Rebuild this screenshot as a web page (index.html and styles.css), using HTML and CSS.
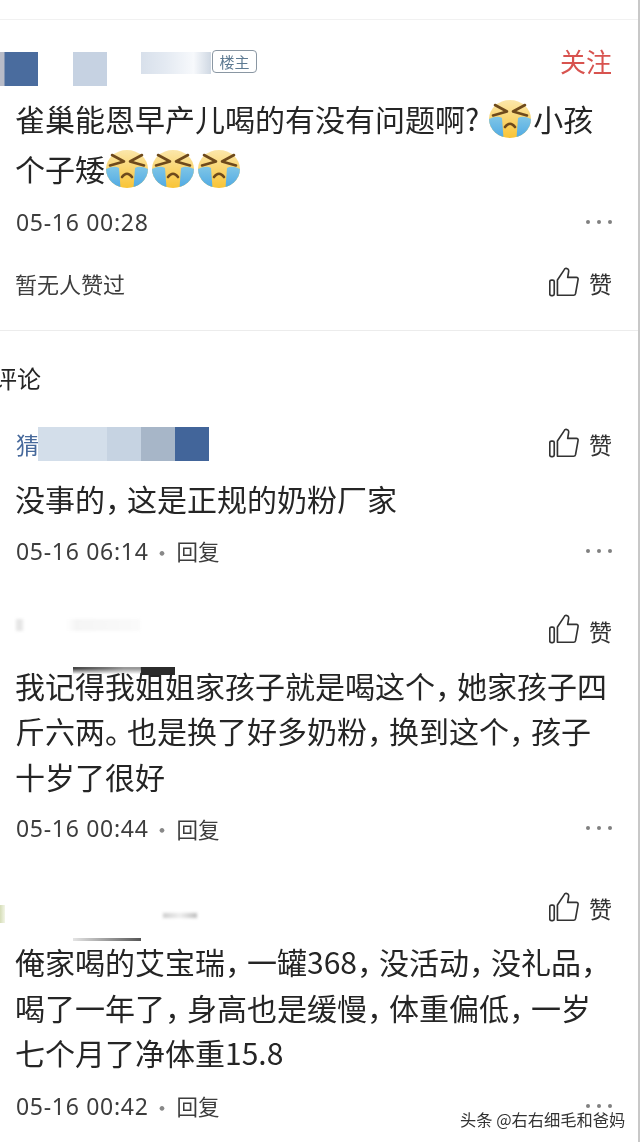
FILE: index.html
```html
<!DOCTYPE html>
<html lang="zh">
<head>
<meta charset="utf-8">
<title>评论</title>
<link rel="stylesheet" href="styles.css">
</head>
<body>
<svg class="defs" width="0" height="0" aria-hidden="true">
  <defs>
    <linearGradient id="skin" x1="0" y1="0" x2="0" y2="1">
      <stop offset="0" stop-color="#fbe7ab"/>
      <stop offset="1" stop-color="#f9c435"/>
    </linearGradient>
    <linearGradient id="tear" x1="0" y1="0" x2="0" y2="1">
      <stop offset="0" stop-color="#7fc6e6"/>
      <stop offset="1" stop-color="#4fa9e4"/>
    </linearGradient>
    <clipPath id="face"><ellipse cx="21" cy="19" rx="21" ry="19"/></clipPath>
    <symbol id="cry" viewBox="0 0 42 38">
      <ellipse cx="21" cy="19" rx="21" ry="19" fill="url(#skin)"/>
      <g clip-path="url(#face)">
        <path d="M0 19 Q8 15 13 18 L14.5 38 H0 Z" fill="url(#tear)"/>
        <path d="M42 19 Q34 15 29 18 L27.5 38 H42 Z" fill="url(#tear)"/>
      </g>
      <path d="M6 5 L18 11.5 L4 15.5" fill="none" stroke="#6e4a1c" stroke-width="2.6" stroke-linecap="round" stroke-linejoin="round"/>
      <path d="M36 5 L24 11.5 L38 15.5" fill="none" stroke="#6e4a1c" stroke-width="2.6" stroke-linecap="round" stroke-linejoin="round"/>
      <path d="M16 27 Q21 20.5 26 27" fill="none" stroke="#6e4a1c" stroke-width="2.6" stroke-linecap="round"/>
    </symbol>
    <symbol id="thumb" viewBox="0 0 32 30">
      <rect x="0.8" y="13" width="4.6" height="16" rx="1.6" fill="none" stroke="#333" stroke-width="1.7"/>
      <path d="M8.7 28.7 V13 L15.3 3 Q16 .8 17.6 .9 Q20.6 1.2 20.3 4 L19.3 10.3 H28.2 Q30.4 10.3 30 12.5 L27.4 27 Q27 28.7 25.4 28.7 Z" fill="none" stroke="#333" stroke-width="1.7" stroke-linejoin="round"/>
    </symbol>
  </defs>
</svg>

<main class="page">
  <section class="post">
    <header class="post-head">
      <div class="redact">
        <span class="blk blk-a"></span>
        <span class="blk blk-b"></span>
        <span class="blk blk-c"></span>
      </div>
      <span class="tag">楼主</span>
      <span class="follow">关注</span>
    </header>
    <p class="text post-text">雀巢能恩早产儿喝的有没有问题啊?<svg class="emoji emoji-first"><use href="#cry"/></svg>小孩<br>个子矮<svg class="emoji"><use href="#cry"/></svg><svg class="emoji"><use href="#cry"/></svg><svg class="emoji"><use href="#cry"/></svg></p>
    <div class="meta post-meta">
      <span class="time">05-16 00:28</span>
      <span class="more"><i></i><i></i><i></i></span>
    </div>
    <div class="likes">
      <span class="nolike">暂无人赞过</span>
      <span class="like"><svg class="thumb"><use href="#thumb"/></svg><b>赞</b></span>
    </div>
  </section>

  <h2 class="title">评论</h2>

  <article class="comment c1">
    <div class="c-head">
      <div class="name-bar">
        <span class="name">猜</span>
        <span class="seg s1"></span><span class="seg s2"></span><span class="seg s3"></span><span class="seg s4"></span>
      </div>
      <span class="like"><svg class="thumb"><use href="#thumb"/></svg><b>赞</b></span>
    </div>
    <p class="text">没事的<span class="cm">，</span>这是正规的奶粉厂家</p>
    <div class="meta">
      <span class="time">05-16 06:14</span><span class="sep">·</span><span class="reply">回复</span>
      <span class="more"><i></i><i></i><i></i></span>
    </div>
  </article>

  <article class="comment c2">
    <div class="c-head">
      <span class="smudge"></span>
      <span class="like"><svg class="thumb"><use href="#thumb"/></svg><b>赞</b></span>
    </div>
    <div class="text-wrap">
      <span class="smear smear-dark"></span>
      <p class="text">我记得我姐姐家孩子就是喝这个<span class="cm">，</span>她家孩子四<br>斤六两<span class="cm">。</span>也是换了好多奶粉<span class="cm">，</span>换到这个<span class="cm">，</span>孩子<br>十岁了很好</p>
    </div>
    <div class="meta">
      <span class="time">05-16 00:44</span><span class="sep">·</span><span class="reply">回复</span>
      <span class="more"><i></i><i></i><i></i></span>
    </div>
  </article>

  <article class="comment c3">
    <span class="leaf"></span>
    <div class="c-head">
      <span class="smudge smudge-r"></span>
      <span class="like"><svg class="thumb"><use href="#thumb"/></svg><b>赞</b></span>
    </div>
    <div class="text-wrap">
      <span class="smear smear-thin"></span>
      <p class="text">俺家喝的艾宝瑞<span class="cm">，</span>一罐368<span class="cm">，</span>没活动<span class="cm">，</span>没礼品<span class="cm">，</span><br>喝了一年了<span class="cm">，</span>身高也是缓慢<span class="cm">，</span>体重偏低<span class="cm">，</span>一岁<br>七个月了净体重15.8</p>
    </div>
    <div class="meta">
      <span class="time">05-16 00:42</span><span class="sep">·</span><span class="reply">回复</span>
      <span class="more"><i></i><i></i><i></i></span>
    </div>
  </article>

  <span class="mark">头条 @右右细毛和爸妈</span>
</main>
</body>
</html>
```

FILE: styles.css
```css
* { box-sizing: border-box; }
html, body { margin: 0; padding: 0; background: #fff; }
body {
  font-family: "Noto Sans CJK SC", "Noto Sans", sans-serif;
  color: #252525;
  overflow: hidden;
}
.defs { position: absolute; }
.page {
  position: relative;
  width: 640px;
  height: 1142px;
  padding-top: 19px;
  border-right: 2px solid #c8c8c8;
  overflow: hidden;
  filter: blur(0.35px);
}
.post {
  height: 312px;
  border-top: 1px solid #f1f1f1;
  border-bottom: 1px solid #ececec;
  padding: 30px 26px 0 16px;
}
.post-head { display: flex; align-items: flex-start; height: 36px; margin-left: -16px; }
.redact { display: flex; width: 212px; height: 34px; align-items: flex-start; }
.blk { display: block; }
.blk-a { width: 38px; height: 34px; margin-top: 2px; background: linear-gradient(90deg, #b9bcc8 0, #b9bcc8 4px, #4a6c9e 5px); }
.blk-b { width: 34px; height: 34px; margin: 2px 0 0 35px; background: #c6d2e2; }
.blk-c { width: 70px; height: 22px; margin: 2px 0 0 34px; background: linear-gradient(90deg, #d8e0eb 0, #e4eaf2 35%, #f7f9fc 75%, #cfd8e3 100%); }
.tag {
  width: 45px; height: 23px;
  border: 1px solid #8a97a3;
  border-radius: 4px;
  font-size: 15px; line-height: 21px;
  text-align: center; color: #5d7a92;
  background: #fff;
}
.follow { margin: -2px 0 0 auto; color: #d8534f; font-size: 26px; line-height: 26px; }
.text { position: relative; margin: 0 0 0 -1px; font-size: 30px; line-height: 45.5px; color: #252525; white-space: nowrap; }
.cm { letter-spacing: -8px; }
.post-text { margin-top: 7px; line-height: 50px; }
.emoji { width: 42px; height: 38px; vertical-align: -7px; margin: 0 3px 0 1px; }
.emoji-first { margin: 0 2px 0 10px; }
.meta { display: flex; align-items: center; height: 30px; color: #3d3d3d; font-size: 22px; }
.post-meta { margin-top: 14px; }
.time { font-family: "Noto Sans", sans-serif; font-size: 23px; letter-spacing: .7px; }
.sep { width: 29px; text-align: center; margin-left: -1px; color: #888; }
.reply { font-size: 21.5px; }
.more { display: flex; gap: 7px; margin-left: auto; }
.more i { display: block; width: 4px; height: 4px; border-radius: 50%; background: #808080; }
.likes { display: flex; align-items: center; justify-content: space-between; margin-top: 30px; height: 32px; }
.nolike { font-size: 22px; color: #3d3d3d; margin-left: -1px; }
.like { display: inline-flex; align-items: center; gap: 9px; font-size: 23px; color: #333; }
.like b { font-weight: 400; line-height: 30px; }
.thumb { width: 31px; height: 30px; margin-bottom: 3px; }
.title { margin: 28px 0 0 -7px; font-weight: 400; font-size: 24px; line-height: 38px; color: #252525; }
.comment { position: relative; padding: 0 26px 0 16px; }
.c1 { margin-top: 30px; }
.c2 { margin-top: 48px; }
.c3 { margin-top: 48px; }
.c-head { display: flex; align-items: center; justify-content: space-between; height: 34px; }
.c1 .text { margin-top: 15px; }
.c1 .meta { margin-top: 14px; }
.name-bar { display: flex; align-items: center; height: 34px; }
.name { width: 22px; font-size: 23px; line-height: 34px; color: #47699b; overflow: hidden; }
.seg { display: block; height: 34px; width: 34px; }
.s1 { width: 69px; background: #d3deea; }
.s2 { background: #c6d3e2; }
.s3 { background: #a7b6c8; }
.s4 { background: #42659a; }
.text-wrap { position: relative; margin-top: 15px; }
.c3 .text-wrap { margin-top: 14px; }
.comment .meta { margin-top: 14px; }
.c3 .meta { margin-top: 15px; }
.smudge {
  display: block; width: 124px; height: 12px; margin-top: -12px;
  background: linear-gradient(90deg, #e6e6e6 0, #e6e6e6 6px, #fff 8px, #fff 50px, #f5f5f5 60px, #fafafa 100%);
  filter: blur(1.5px);
}
.smudge-r {
  width: 34px; height: 5px; margin: 15px auto 0 147px;
  background: linear-gradient(90deg, #ccc, #eee 50%, #bbb);
}
.smear { position: absolute; display: block; }
.smear-dark {
  left: 57px; top: 4px; width: 102px; height: 8px;
  background:
    linear-gradient(180deg, transparent 20%, #fff 90%) left top / 68px 100% no-repeat,
    linear-gradient(90deg, #444 0, #777 33%, #999 50%, #999 66%, #2b2b2b 67%, #2b2b2b 100%);
}
.smear-thin { left: 57px; top: -1px; width: 68px; height: 3px; background: linear-gradient(90deg, #e4e4e4, #555); }
.leaf { position: absolute; left: 0; top: 14px; width: 5px; height: 18px; background: linear-gradient(90deg, #d5ddb8, #f2f5e6); }
.mark {
  position: absolute; left: 460px; top: 1108px;
  font-size: 16.25px; line-height: 22px; color: #333;
  text-shadow: 0 0 2px #fff;
}
```
